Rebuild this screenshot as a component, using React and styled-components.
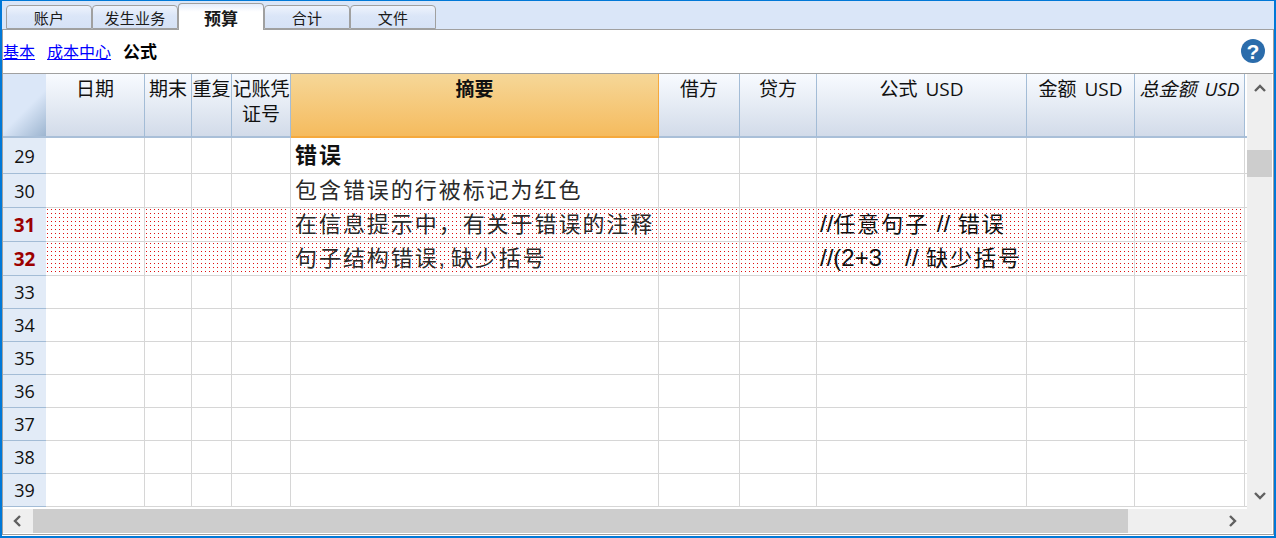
import React from 'react';
import styled, { createGlobalStyle } from 'styled-components';

const GlobalStyle = createGlobalStyle`
  html, body {
    margin: 0;
    padding: 0;
    background: #fff;
  }
  * {
    box-sizing: border-box;
  }
`;

const FONT = '"Liberation Sans", "Noto Sans CJK SC", sans-serif';
const HEAD_FONT = '"Open Sans", "Noto Sans CJK SC", sans-serif';

const COLS = [99, 47, 40, 59, 368, 81, 77, 210, 108, 110];

const gridTemplate = COLS.map((c) => c + 'px').join(' ');

const Window = styled.div`
  width: 1276px;
  height: 538px;
  display: flex;
  flex-direction: column;
  border: 2px solid #0078d7;
  border-top-width: 1px;
  background: #fff;
  font-family: ${FONT};
  overflow: hidden;
`;

const TabStrip = styled.div`
  height: 29px;
  flex: none;
  display: flex;
  align-items: flex-end;
  padding-left: 4px;
  background: #dae6f8;
  border-bottom: 1px solid #a0a0a0;
`;

const Tab = styled.div`
  width: 86px;
  height: ${(p) => (p.$active ? 27 : 24)}px;
  margin-bottom: ${(p) => (p.$active ? -1 : 0)}px;
  display: flex;
  align-items: center;
  justify-content: center;
  font-size: ${(p) => (p.$active ? 17 : 15)}px;
  font-weight: ${(p) => (p.$active ? 700 : 400)};
  letter-spacing: ${(p) => (p.$active ? 0 : 0.3)}px;
  color: #1a1a1a;
  border: 1px solid #a0a0a0;
  border-bottom: ${(p) => (p.$active ? 'none' : '1px solid #a0a0a0')};
  border-radius: 4px 4px 0 0;
  background: ${(p) =>
    p.$active
      ? 'linear-gradient(#e4ecfb 0%, #fff 30%, #fff 100%)'
      : 'linear-gradient(#eef3fc 0%, #dbe6f8 45%, #d6e2f6 100%)'};
`;

const Body = styled.div`
  flex: 1;
  display: flex;
  flex-direction: column;
  min-height: 0;
  margin-bottom: 1px;
  border-right: 1px solid #a0a0a0;
  border-left: 1px solid #a0a0a0;
  border-bottom: 1px solid #a0a0a0;
`;

const SubBar = styled.div`
  height: 43px;
  flex: none;
  display: flex;
  align-items: center;
  justify-content: space-between;
  padding: 0 8px 2px 0;
`;

const SubLinks = styled.div`
  display: flex;
  align-items: center;
  gap: 12px;
  font-size: 16px;
`;

const SubLink = styled.a`
  color: #0000ff;
  text-decoration: underline;
  cursor: pointer;
`;

const SubCurrent = styled.span`
  font-size: 17px;
  font-weight: 700;
  color: #000;
`;

const HelpIcon = styled.svg`
  width: 24px;
  height: 24px;
  display: block;
`;

const GridArea = styled.div`
  flex: 1;
  display: grid;
  grid-template-columns: 1fr 25px;
  grid-template-rows: 1fr 24px;
  min-height: 0;
  padding: 0 1px 1px 0;
  border-top: 1px solid #a0a0a0;
`;

const Sheet = styled.div`
  min-height: 0;
  overflow: hidden;
`;

const Row = styled.div`
  display: grid;
  grid-template-columns: 43px ${gridTemplate} 1fr;
  height: ${(p) => p.$h}px;
`;

const Corner = styled.div`
  background: linear-gradient(135deg, #dbe7f8 0%, #dbe7f8 55%, #9db5d0 100%);
  border-bottom: 2px solid #a9bfd8;
`;

const HeadCell = styled.div`
  padding-top: 3px;
  text-align: center;
  font-family: ${HEAD_FONT};
  font-size: 19px;
  line-height: 25px;
  word-spacing: 3px;
  color: #111;
  white-space: ${(p) => (p.$wrap ? 'normal' : 'nowrap')};
  overflow: hidden;
  font-weight: ${(p) => (p.$active ? 700 : 400)};
  font-style: ${(p) => (p.$italic ? 'italic' : 'normal')};
  background: ${(p) =>
    p.$active
      ? 'linear-gradient(#f6d798, #f5bb5e)'
      : 'linear-gradient(#f8fbff, #d2dbe9)'};
  border-right: 1px solid ${(p) => (p.$active ? '#f5a93d' : '#a3bcd6')};
  border-bottom: 2px solid ${(p) => (p.$active ? '#f5a93d' : '#a9bfd8')};
`;

const HeadTail = styled.div`
  border-bottom: 2px solid #a9bfd8;
`;

const RowNumber = styled.div`
  display: flex;
  align-items: center;
  justify-content: center;
  background: #e2ebf7;
  border-bottom: 1px solid #a3bcd6;
  font-family: "Open Sans", sans-serif;
  font-size: ${(p) => (p.$error ? 19 : 18)}px;
  font-weight: ${(p) => (p.$error ? 700 : 400)};
  color: ${(p) => (p.$error ? '#9c0000' : '#111')};
`;

const Cell = styled.div`
  position: relative;
  display: flex;
  align-items: center;
  padding: 0 0 6px ${(p) => (p.$tight ? 3 : 4)}px;
  font-size: 22px;
  font-weight: ${(p) => (p.$bold ? 700 : 400)};
  color: ${(p) => (p.$bold ? '#111' : '#2a2a2a')};
  white-space: pre;
  overflow: hidden;
  border-right: 1px solid #d6d6d6;
  border-bottom: 1px solid #d6d6d6;
  background-color: #fff;
  ${(p) =>
    p.$error &&
    `
    &::before {
      content: '';
      position: absolute;
      inset: 1px;
      background-color: #e01010;
      background-image:
        linear-gradient(90deg, transparent 1px, #fff 1px),
        linear-gradient(180deg, transparent 1px, #fff 1px);
      background-size: 4px 4px;
    }
  `}
`;

const CellText = styled.span`
  position: relative;
`;

const Cjk = styled.span`
  font-size: 22px;
  letter-spacing: 1.95px;
`;

const Formula = styled.span`
  font-size: 24px;
  word-spacing: 1px;
  color: #111;
`;

const RowTail = styled.div`
  border-bottom: 1px solid #d6d6d6;
`;

const VBar = styled.div`
  background: #efefef;
  display: flex;
  flex-direction: column;
  align-items: center;
  justify-content: space-between;
  padding: 9px 0 8px;
  position: relative;
`;

const VThumb = styled.div`
  position: absolute;
  left: 0;
  right: 0;
  top: 76px;
  height: 27px;
  background: #cdcdcd;
`;

const HBar = styled.div`
  background: #efefef;
  display: flex;
  align-items: center;
  grid-column: 1 / 3;
  padding-right: 27px;
`;

const HArrow = styled.div`
  width: ${(p) => p.$w}px;
  height: 100%;
  flex: none;
  display: flex;
  align-items: center;
  justify-content: center;
`;

const HTrack = styled.div`
  flex: 1;
  height: 24px;
`;

const HThumb = styled.div`
  width: 1095px;
  height: 24px;
  background: #cdcdcd;
`;

const Chevron = ({ points }) => (
  <svg width="12" height="12" viewBox="0 0 12 12">
    <polyline points={points} fill="none" stroke="#606060" strokeWidth="2.4" />
  </svg>
);

const headers = [
  { label: '日期' },
  { label: '期末' },
  { label: '重复' },
  { label: '记账凭证号', wrap: true },
  { label: '摘要', active: true },
  { label: '借方' },
  { label: '贷方' },
  { label: '公式 USD' },
  { label: '金额 USD' },
  { label: '总金额 USD', italic: true },
];

const rows = [
  { n: 29, h: 36, desc: <Cjk>错误</Cjk>, bold: true },
  { n: 30, h: 34, desc: <Cjk>包含错误的行被标记为红色</Cjk> },
  {
    n: 31,
    h: 34,
    desc: <Cjk>在信息提示中，有关于错误的注释</Cjk>,
    formula: <Formula>//<Cjk>任意句子</Cjk> // <Cjk>错误</Cjk></Formula>,
    error: true,
  },
  {
    n: 32,
    h: 34,
    desc: <><Cjk>句子结构错误</Cjk>, <Cjk>缺少括号</Cjk></>,
    formula: <Formula>//(2+3   // <Cjk>缺少括号</Cjk></Formula>,
    error: true,
  },
  { n: 33, h: 33 },
  { n: 34, h: 33 },
  { n: 35, h: 33 },
  { n: 36, h: 33 },
  { n: 37, h: 33 },
  { n: 38, h: 33 },
  { n: 39, h: 33 },
];

export default function App() {
  return (
    <>
      <GlobalStyle />
      <Window>
        <TabStrip>
          <Tab>账户</Tab>
          <Tab>发生业务</Tab>
          <Tab $active>预算</Tab>
          <Tab>合计</Tab>
          <Tab>文件</Tab>
        </TabStrip>
        <Body>
          <SubBar>
            <SubLinks>
              <SubLink>基本</SubLink>
              <SubLink>成本中心</SubLink>
              <SubCurrent>公式</SubCurrent>
            </SubLinks>
            <HelpIcon viewBox="0 0 24 24">
              <circle cx="12" cy="12" r="12" fill="#2b6cab" />
              <text x="12" y="19.5" textAnchor="middle" fontFamily="Liberation Sans" fontWeight="700" fontSize="21" fill="#fff">?</text>
            </HelpIcon>
          </SubBar>
          <GridArea>
            <Sheet>
              <Row $h={64}>
                <Corner />
                {headers.map((h) => (
                  <HeadCell key={h.label} $active={h.active} $italic={h.italic} $wrap={h.wrap}>
                    {h.label}
                  </HeadCell>
                ))}
                <HeadTail />
              </Row>
              {rows.map((r) => (
                <Row key={r.n} $h={r.h}>
                  <RowNumber $error={r.error}>{r.n}</RowNumber>
                  {COLS.map((_, i) => (
                    <Cell key={i} $error={r.error} $bold={i === 4 && r.bold} $tight={i === 7}>
                      <CellText>{i === 4 ? r.desc : i === 7 ? r.formula : null}</CellText>
                    </Cell>
                  ))}
                  <RowTail />
                </Row>
              ))}
            </Sheet>
            <VBar>
              <Chevron points="1,8 6,3 11,8" />
              <VThumb />
              <Chevron points="1,4 6,9 11,4" />
            </VBar>
            <HBar>
              <HArrow $w={30}><Chevron points="8,1 3,6 8,11" /></HArrow>
              <HTrack><HThumb /></HTrack>
              <HArrow $w={26}><Chevron points="4,1 9,6 4,11" /></HArrow>
            </HBar>
          </GridArea>
        </Body>
      </Window>
    </>
  );
}
